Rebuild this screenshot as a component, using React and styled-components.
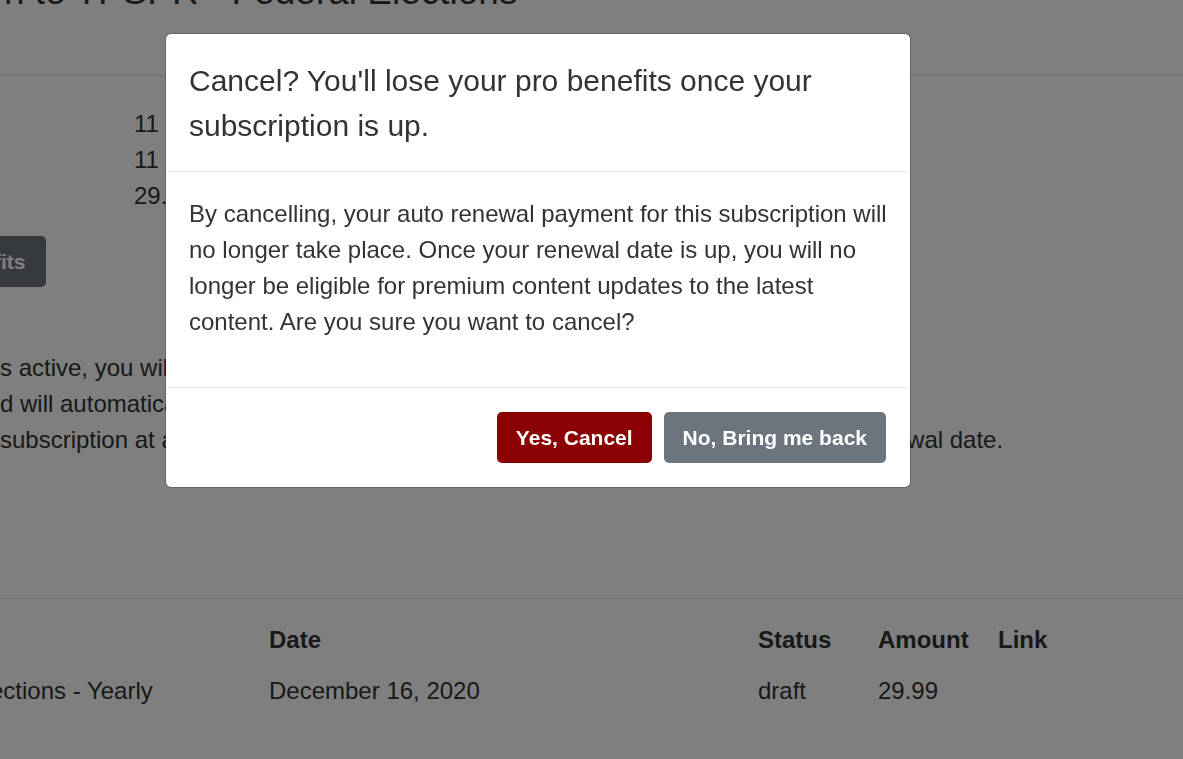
import { Fragment } from 'react';
import styled, { createGlobalStyle } from 'styled-components';

const GlobalStyle = createGlobalStyle`
  html, body {
    margin: 0;
    padding: 0;
    background: #fff;
    overflow: hidden;
  }
  body {
    font-family: "Liberation Sans", Arial, sans-serif;
    color: #333;
    font-size: 24px;
    line-height: 36px;
  }
  * { box-sizing: border-box; }
`;

const Page = styled.main`
  height: 759px;
  overflow: hidden;
`;

const PageHeader = styled.header`
  margin-top: -30px;
  padding-bottom: 61px;
  border-bottom: 1px solid #dedede;
`;

const PageTitle = styled.h1`
  margin: 0 0 0 4px;
  font-size: 37px;
  line-height: 44px;
  font-weight: 400;
  white-space: nowrap;
`;

const Details = styled.div`
  padding: 30px 0 0 134px;
  display: grid;
`;

const DetailValue = styled.span`
  display: block;
  line-height: 36px;
  white-space: nowrap;
`;

const BenefitsButton = styled.button`
  margin: 22px 0 0 -6px;
  display: block;
  height: 51px;
  padding: 0 20px 0 0;
  border: 0;
  border-radius: 0 5px 5px 0;
  background: #6c757d;
  color: #fff;
  font: 700 21px/51px "Liberation Sans", Arial, sans-serif;
`;

const Notice = styled.p`
  margin: 63px 0 0;
  line-height: 36px;
  white-space: nowrap;
`;

const History = styled.section`
  margin-top: 140px;
  border-top: 1px solid #dedede;
  padding-top: 23px;
`;

const Table = styled.div`
  margin-left: -10px;
  display: grid;
  grid-template-columns: 279px 489px 120px 120px 1fr;
  grid-auto-rows: 36px;
  row-gap: 15px;
`;

const Cell = styled.div`
  line-height: 36px;
  white-space: nowrap;
  font-weight: ${({ $head }) => ($head ? 700 : 400)};
`;

const Backdrop = styled.div`
  position: fixed;
  inset: 0;
  background: rgba(0, 0, 0, 0.5);
`;

const Modal = styled.div`
  position: fixed;
  top: 33px;
  left: 165px;
  width: 746px;
  background: #fff;
  border: 1px solid rgba(0, 0, 0, 0.2);
  border-radius: 6px;
  background-clip: padding-box;
  display: flex;
  flex-direction: column;
`;

const ModalHeader = styled.div`
  padding: 24px 22px 23px 23px;
  border-bottom: 1px solid #e9ecef;
`;

const ModalTitle = styled.h5`
  margin: 0;
  font-size: 30px;
  line-height: 45px;
  font-weight: 400;
  color: #333;
`;

const ModalBody = styled.div`
  padding: 24px 20px 24px 23px;
`;

const BodyText = styled.p`
  margin: 0 0 23px;
  font-size: 24px;
  line-height: 36px;
  color: #333;
`;

const ModalFooter = styled.div`
  padding: 24px;
  border-top: 1px solid #e9ecef;
  display: flex;
  justify-content: flex-end;
  gap: 12px;
`;

const ActionButton = styled.button`
  height: 51px;
  padding: 0 19px;
  border: 0;
  border-radius: 5px;
  background: ${({ $variant }) => ($variant === 'danger' ? '#8b0000' : '#6c757d')};
  color: #fff;
  font: 700 21px/51px "Liberation Sans", Arial, sans-serif;
  cursor: pointer;
`;

const invoices = [
  { id: 1, name: 'ections - Yearly', date: 'December 16, 2020', status: 'draft', amount: '29.99' }
];

export default function App() {
  return (
    <>
      <GlobalStyle />
      <Page>
        <PageHeader>
          <PageTitle>n to TPSPR - Federal Elections</PageTitle>
        </PageHeader>
        <Details>
          <DetailValue>11 months</DetailValue>
          <DetailValue>11 months</DetailValue>
          <DetailValue>29.99</DetailValue>
        </Details>
        <BenefitsButton>fits</BenefitsButton>
        <Notice>
          s active, you will continue to have full access to the premium content.
          <br />
          d will automatically renew each year on the renewal date.
          <br />
          subscription at any time from your account settings, and it will remain active until renewal date.
        </Notice>
        <History>
          <Table>
            <Cell $head />
            <Cell $head>Date</Cell>
            <Cell $head>Status</Cell>
            <Cell $head>Amount</Cell>
            <Cell $head>Link</Cell>
            {invoices.map((inv) => (
              <Fragment key={inv.id}>
                <Cell>{inv.name}</Cell>
                <Cell>{inv.date}</Cell>
                <Cell>{inv.status}</Cell>
                <Cell>{inv.amount}</Cell>
                <Cell />
              </Fragment>
            ))}
          </Table>
        </History>
      </Page>
      <Backdrop />
      <Modal role="dialog">
        <ModalHeader>
          <ModalTitle>Cancel? You'll lose your pro benefits once your subscription is up.</ModalTitle>
        </ModalHeader>
        <ModalBody>
          <BodyText>
            By cancelling, your auto renewal payment for this subscription will no longer take place. Once your
            renewal date is up, you will no longer be eligible for premium content updates to the latest content. Are
            you sure you want to cancel?
          </BodyText>
        </ModalBody>
        <ModalFooter>
          <ActionButton $variant="danger">Yes, Cancel</ActionButton>
          <ActionButton>No, Bring me back</ActionButton>
        </ModalFooter>
      </Modal>
    </>
  );
}
